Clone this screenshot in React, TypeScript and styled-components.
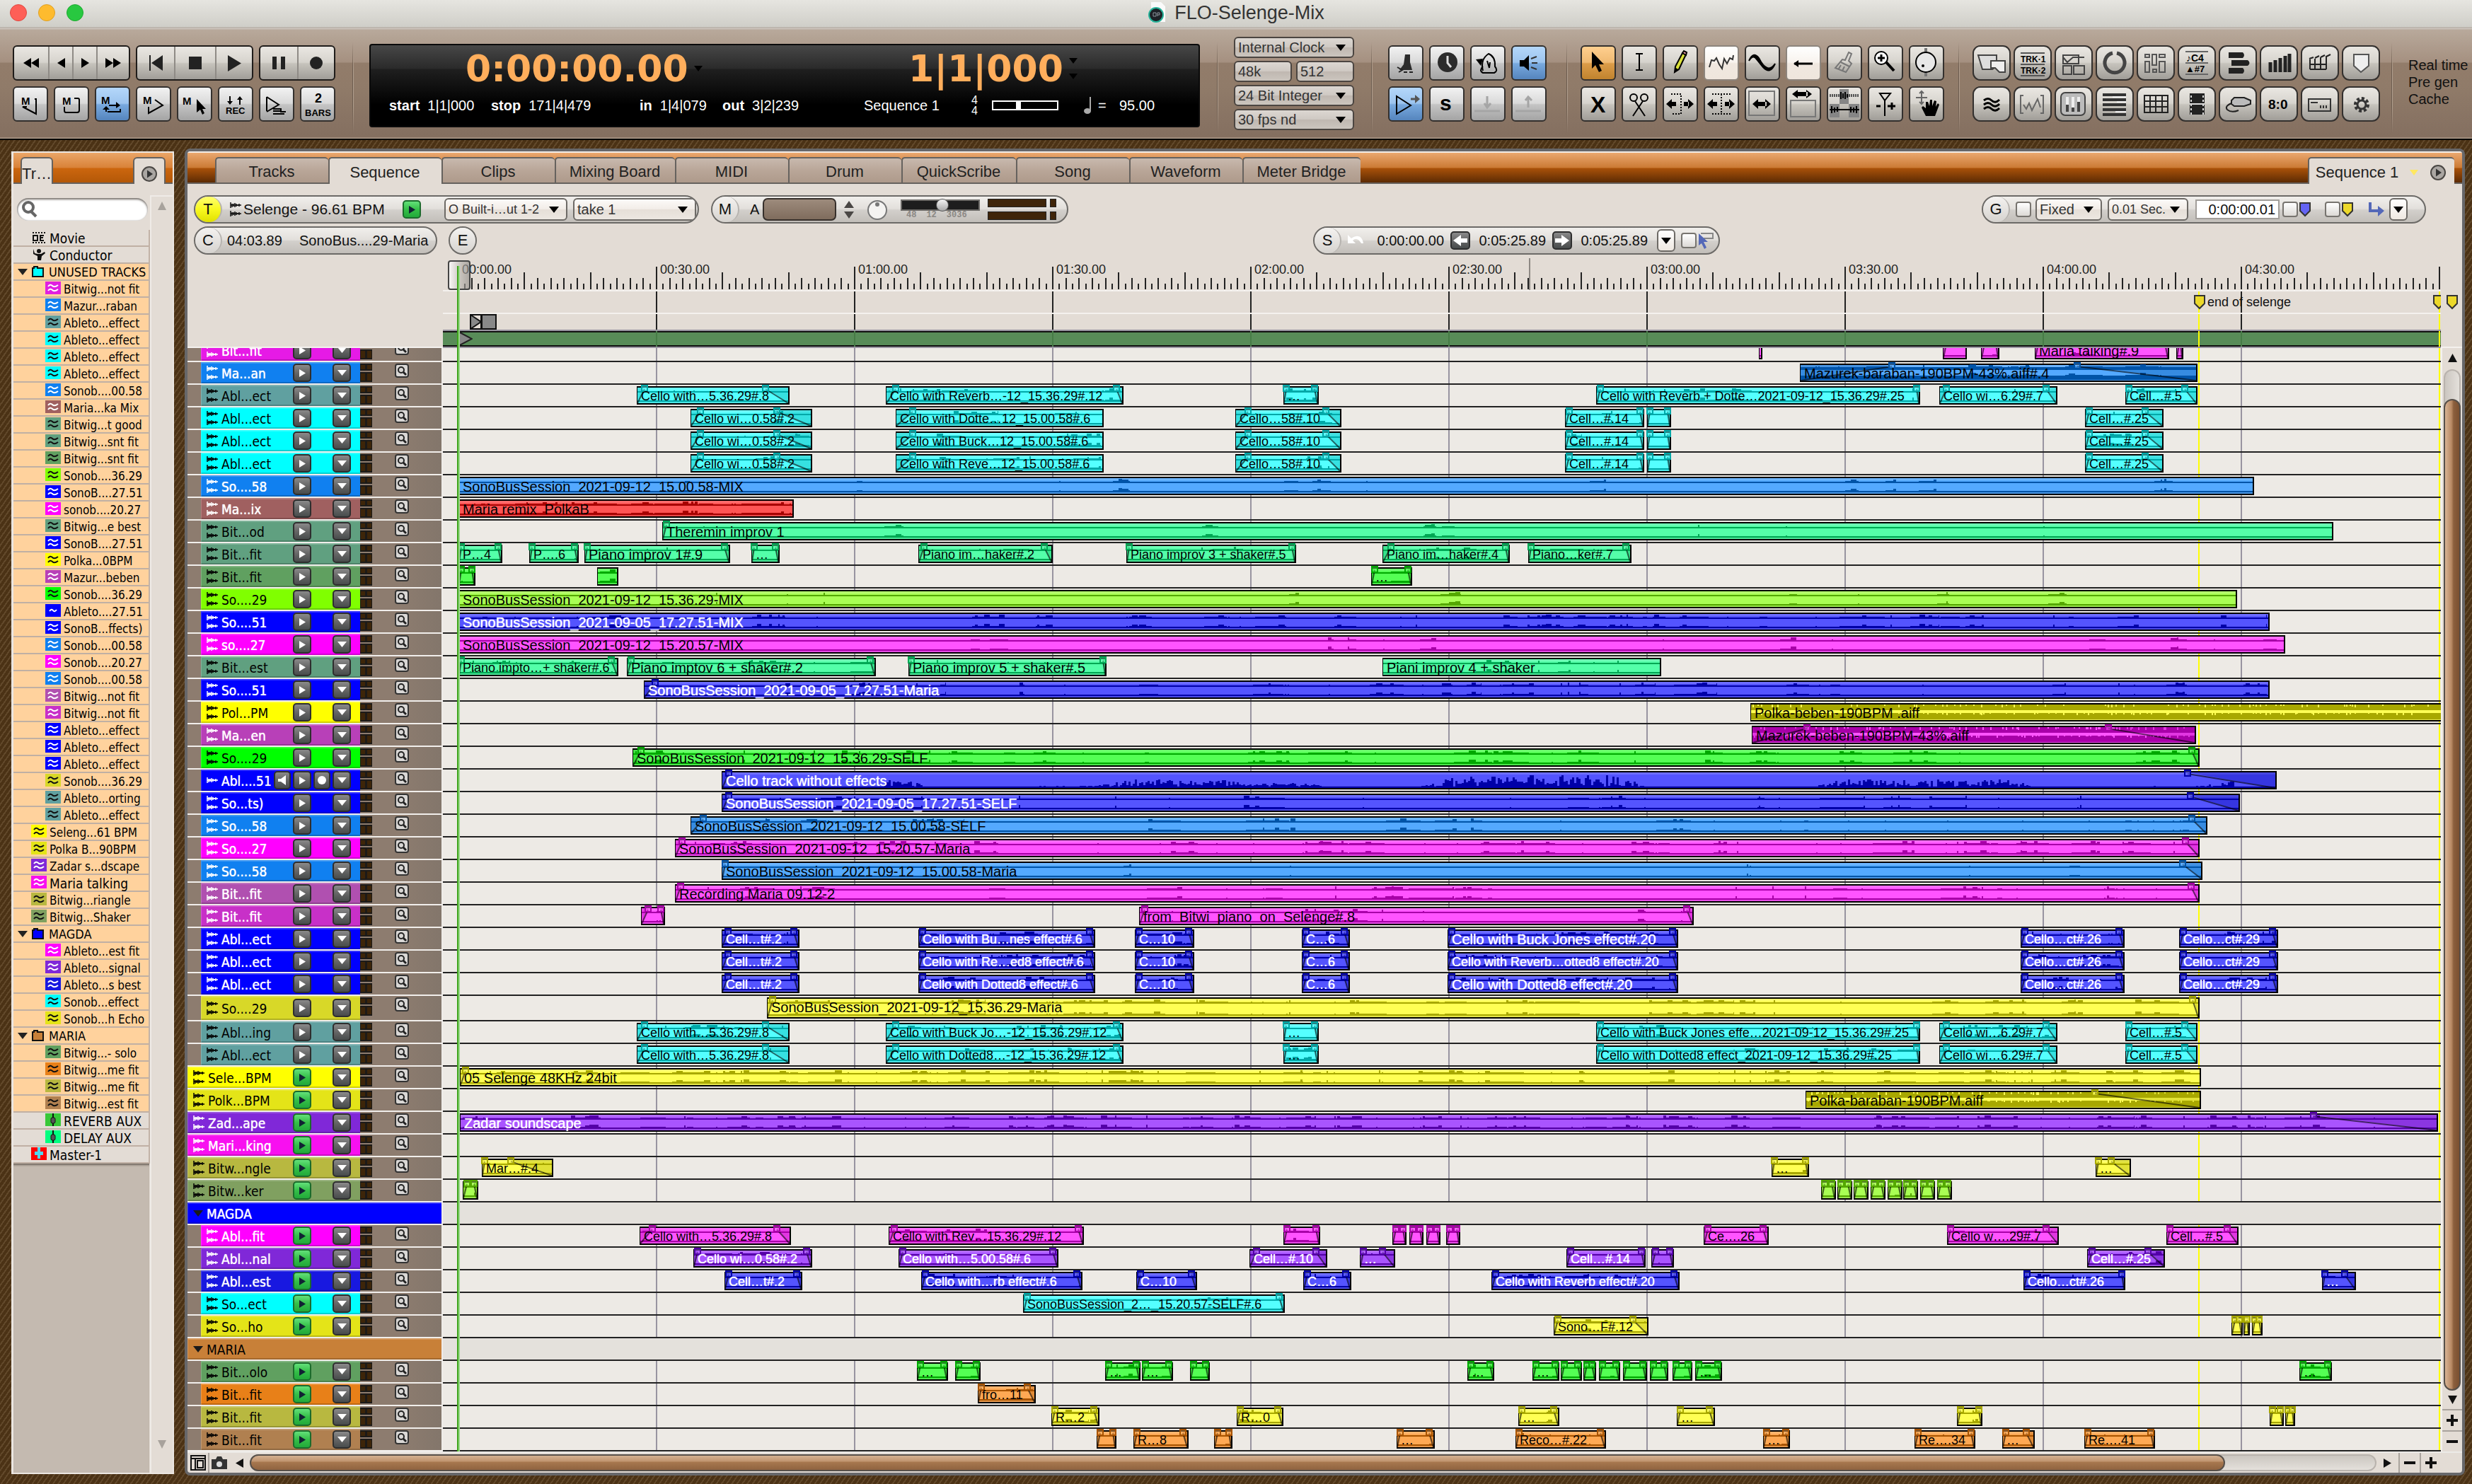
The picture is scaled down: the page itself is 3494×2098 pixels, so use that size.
import React from "react";
import styled, { createGlobalStyle } from "styled-components";

const Global = createGlobalStyle`
  *, *::before, *::after { box-sizing: border-box; }
  html, body { margin: 0; padding: 0; }
  body { font-family: "Liberation Sans", Arial, sans-serif; font-size: 20px; color: #111; background: #523a1b; }
  button, input, select { font-family: inherit; font-size: inherit; color: inherit; margin: 0; padding: 0; }
  ul { list-style: none; margin: 0; padding: 0; }
  svg { display: block; flex: none; }
`;

const uiSans = `"DejaVu Sans Condensed", "DejaVu Sans", "Noto Sans", sans-serif`;

/* ---------- window shell ---------- */

const Window = styled.div`
  display: flex;
  flex-direction: column;
  height: 100vh;
  min-width: 1900px;
  overflow: hidden;
`;

const TitleBar = styled.header`
  position: relative;
  display: flex;
  align-items: center;
  justify-content: center;
  height: 42px;
  flex: none;
  padding: 0 14px 6px;
  background: linear-gradient(#e6e5e0, #cfcec8 38px, #b0a79e 39px, #d8d0c8 41px, #a89a8e);
  h1 { display: flex; align-items: center; gap: 12px; margin: 0; font: 400 27px "Liberation Sans", Arial, sans-serif; color: #333; line-height: 34px; }
`;

const Lights = styled.div`
  position: absolute;
  left: 14px;
  top: 6px;
  display: flex;
  gap: 16px;
`;

const Light = styled.button<{ $c: string; $e: string }>`
  width: 24px;
  height: 24px;
  border-radius: 50%;
  background: ${(p) => p.$c};
  border: 1px solid ${(p) => p.$e};
`;

const Toolbar = styled.div`
  display: flex;
  align-items: flex-start;
  flex: none;
  height: 156px;
  padding: 10px 0 0 18px;
  border-bottom: 2px solid #000;
  background: linear-gradient(#b8a99b, #a59080 46px, #927c6a 47px, #907b69 80px, #846f60 152px, #b09c8c 153px);
`;

const Rule = styled.div<{ $before: number; $after: number }>`
  flex: none;
  width: 2px;
  height: 128px;
  margin: 8px ${(p) => p.$after}px 0 ${(p) => p.$before}px;
  background: linear-gradient(90deg, #6b5b4e 50%, #b3a190 50%);
  mask-image: linear-gradient(transparent, #000 30%, #000 70%, transparent);
`;

const Pad = styled.div<{ $cols: number; $w: number; $gap: number }>`
  display: grid;
  flex: none;
  grid-template-columns: repeat(${(p) => p.$cols}, ${(p) => p.$w}px);
  gap: 8px ${(p) => p.$gap}px;
  padding-top: 12px;
`;

const tones: Record<string, string> = {
  steel: "linear-gradient(#f2f2f2, #d9d9d9 48%, #c4c4c4 52%, #a4a4a4)",
  warm: "linear-gradient(#eae7e2, #d6d3cd 48%, #c6c3bc 52%, #a09d98)",
  blue: "linear-gradient(#b4d7fa, #9cc4ee 48%, #78a9de 52%, #5585bd)",
  orange: "linear-gradient(#ffcf8f, #f0ba72 48%, #dc9c48 52%, #c0832e)",
  light: "linear-gradient(#ffffff, #f8f3ee 48%, #f0e8e0 52%, #efe6dd)",
};

const ToolButton = styled.button<{ $tone: string; $r?: number }>`
  display: flex;
  align-items: center;
  justify-content: center;
  height: 50px;
  border: 2px solid ${(p) => (p.$tone === "light" ? "#8d857d" : "#33302e")};
  border-radius: ${(p) => p.$r || 6}px;
  background: ${(p) => tones[p.$tone]};
  color: #000;
  overflow: hidden;
`;

const Transport = styled.div`
  flex: none;
  width: 456px;
  padding-top: 12px;
  display: flex;
  flex-direction: column;
  gap: 8px;
`;
const SegRow = styled.div`display: flex; gap: 8px;`;
const Seg = styled.div`
  display: flex;
  height: 50px;
  border: 2px solid #1f1c1a;
  border-radius: 6px;
  overflow: hidden;
  background: ${tones.warm};
`;
const SegBtn = styled.button<{ $w: number }>`
  width: ${(p) => p.$w}px;
  display: flex;
  align-items: center;
  justify-content: center;
  border: 0;
  border-left: 2px solid #8f8b86;
  background: none;
  &:first-child { border-left: 0; }
`;
const PadRow = styled.div`
  display: grid;
  grid-template-columns: repeat(8, 50px);
  gap: 8px;
`;

/* ---------- counter display ---------- */

const Display = styled.section`
  flex: 1;
  height: 118px;
  margin-top: 10px;
  border: 2px solid #0a0a0a;
  border-radius: 4px;
  background: linear-gradient(#474747, #2a2a2a 33px, #1f1f1f 34px, #000 84px);
  color: #fff;
  overflow: hidden;
`;
const Counters = styled.div`
  display: grid;
  grid-template-columns: 626px 1fr;
  padding: 4px 0 0 134px;
  height: 70px;
`;
const Counter = styled.div`
  display: flex;
  align-items: center;
  gap: 8px;
  height: 58px;
  font: 700 52px/58px "DejaVu Sans", sans-serif;
  color: #ffae5c;
  white-space: nowrap;
`;
const Carets = styled.span`
  display: flex;
  flex-direction: column;
  gap: 14px;
`;
const Readouts = styled.div`
  display: grid;
  grid-template-columns: 144px 210px 117px 200px 152px 29px 130px 20px 30px 1fr;
  align-items: center;
  padding-left: 26px;
  height: 26px;
  font-size: 20px;
  white-space: nowrap;
  b { margin-right: 11px; }
`;
const Meter44 = styled.span`
  display: flex;
  flex-direction: column;
  font-size: 16px;
  line-height: 15px;
`;
const Beat = styled.span`
  width: 94px;
  height: 14px;
  border: 2px solid #fff;
  background: linear-gradient(90deg, transparent 32px, #fff 32px, #fff 39px, transparent 39px);
`;

/* ---------- pop-up menus ---------- */

const SelectBox = styled.label<{ $w?: number; $h?: number; $light?: boolean; $tight: boolean }>`
  display: grid;
  flex: none;
  align-items: center;
  width: ${(p) => (p.$w ? p.$w + "px" : "auto")};
  height: ${(p) => p.$h || 30}px;
  border: 2px solid ${(p) => (p.$light ? "#6d6a66" : "#4b4541")};
  border-radius: 6px;
  background: ${(p) =>
    p.$light
      ? "linear-gradient(#fcfaf8, #f2ede8 48%, #e6dfd8 52%, #ece7e1)"
      : "linear-gradient(#dcd7d2, #cfc9c3 48%, #c0b8b1 52%, #cbc5be)"};
  color: #333;
  > * { grid-area: 1 / 1; }
  > svg { justify-self: end; margin-right: 10px; pointer-events: none; }
  select {
    appearance: none;
    width: 100%;
    height: 100%;
    border: 0;
    padding-left: 4px;
    background: none;
    font-size: ${(p) => (p.$tight ? 18 : 20)}px;
    line-height: 24px;
  }
`;

const Clocking = styled.div`
  display: grid;
  flex: none;
  grid-template-columns: 82px 82px;
  gap: 4px 6px;
  > :nth-child(1), > :nth-child(4), > :nth-child(5) { grid-column: span 2; }
`;

const Notes = styled.p`
  flex: none;
  width: 90px;
  margin: 28px 0 0;
  line-height: 24px;
  white-space: nowrap;
`;

/* ---------- workspace ---------- */

const Workspace = styled.main`
  flex: 1;
  min-height: 0;
  display: flex;
  gap: 15px;
  padding: 12px 10px 12px 16px;
  background: repeating-linear-gradient(125deg, #4b3215 0 4px, #61482a 4px 6px);
`;

const Sidebar = styled.aside`
  flex: none;
  width: 230px;
  margin: 4px 0 2px;
  display: flex;
  flex-direction: column;
  border: 2px solid #ebe6e1;
  border-left-width: 3px;
  background: #e3dcd5;
`;
const SideHead = styled.div`
  display: flex;
  justify-content: space-between;
  align-items: flex-end;
  height: 44px;
  padding: 0 10px;
  border-bottom: 2px solid #66625e;
  background: linear-gradient(#eaa668, #d98238 21px, #cc660e 22px, #b35808);
`;
const SideTab = styled.button`
  display: flex;
  align-items: center;
  justify-content: center;
  width: 46px;
  height: 38px;
  margin-bottom: -2px;
  padding-top: 8px;
  border: 2px solid #66625e;
  border-bottom: 0;
  border-radius: 6px 6px 0 0;
  background: #e3dcd5;
  font-size: 22px;
  color: #222;
`;
const SideBody = styled.div`
  flex: 1;
  min-height: 0;
  display: grid;
  grid-template-columns: 1fr 32px;
  padding-top: 16px;
`;
const SideMain = styled.div`
  display: flex;
  flex-direction: column;
  min-width: 0;
`;
const Search = styled.label`
  display: flex;
  align-items: center;
  height: 32px;
  margin: 4px 3px 13px 5px;
  padding-left: 6px;
  border-radius: 16px;
  background: #fff;
  box-shadow: inset 0 2px 3px #77716b, inset 1px 0 2px #aaa;
  input { width: 130px; border: 0; background: none; outline: none; }
`;
const TrackList = styled.ul`
  border-right: 2px solid #c2b2a6;
`;
const ListRow = styled.li<{ $sel: boolean; $lv: number; $fs: number }>`
  display: flex;
  align-items: center;
  gap: 4px;
  height: 24px;
  padding-left: ${(p) => [6, 25, 45][p.$lv]}px;
  border-bottom: 2px solid #c0b0a4;
  background: ${(p) => (p.$sel ? "#ffd29d" : "#e3dcd5")};
  font: ${(p) => p.$fs}px/20px ${uiSans};
  color: #000;
  white-space: nowrap;
  span { padding-top: 2px; }
`;
const Swatch = styled.i<{ $c: string }>`
  display: flex;
  align-items: center;
  justify-content: center;
  flex: none;
  width: 22px;
  height: 18px;
  margin-bottom: 2px;
  background: ${(p) => p.$c};
`;
const SideFill = styled.div`
  flex: 1;
  margin-right: 1px;
  background: #c4bab0;
  box-shadow: inset 0 4px 3px -2px #6d645c;
`;
const SideScroll = styled.div`
  display: flex;
  flex-direction: column;
  justify-content: space-between;
  align-items: center;
  padding: 7px 0 34px;
  border-left: 2px solid #efebe7;
  border-top: 2px solid #efebe7;
`;

/* ---------- editor ---------- */

const Editor = styled.section`
  flex: 1;
  min-width: 0;
  display: flex;
  flex-direction: column;
  border: 4px solid #67676a;
  border-radius: 8px;
  background: #e3dcd5;
  overflow: hidden;
`;
const TabBar = styled.nav`
  display: flex;
  align-items: flex-end;
  flex: none;
  height: 46px;
  padding: 0 11px 0 39px;
  border-top: 2px solid #f2ece6;
  border-bottom: 2px solid #66625e;
  background: linear-gradient(#eaa870, #cb7a34 21px, #a95109 22px, #5c2b04);
`;
const Tab = styled.button<{ $w: number; $on?: boolean }>`
  width: ${(p) => p.$w}px;
  height: ${(p) => (p.$on ? 38 : 36)}px;
  margin-bottom: ${(p) => (p.$on ? -2 : 0)}px;
  display: flex;
  align-items: center;
  justify-content: center;
  gap: 16px;
  padding: 4px 2px 0 0;
  border: 2px solid #66625e;
  border-right-width: 0;
  border-bottom: 0;
  border-radius: 5px 5px 0 0;
  background: ${(p) => (p.$on ? "#e3dcd5" : "linear-gradient(#c8b9ae, #b9a698 50%, #ae9a8b)")};
  font-size: 22px;
  color: #222;
  white-space: nowrap;
`;
const Spacer = styled.div`flex: 1;`;

const StripRows = styled.div`
  flex: none;
  display: flex;
  flex-direction: column;
  gap: 4px;
  padding: 16px 51px 0 9px;
`;
const StripRow = styled.div`display: flex; height: 40px;`;
const Strip = styled.div<{ $w: number; $ml?: number }>`
  flex: none;
  display: flex;
  align-items: center;
  width: ${(p) => p.$w}px;
  height: 40px;
  margin-left: ${(p) => p.$ml || 0}px;
  padding-right: 4px;
  border: 2px solid #6c6a67;
  border-radius: 20px;
  background: linear-gradient(#f1efec, #e2dfdb 48%, #d3d0cc 52%, #c2beb9);
  overflow: hidden;
  white-space: nowrap;
`;
const Knob = styled.button<{ $on?: boolean; $solo?: boolean }>`
  flex: none;
  width: ${(p) => (p.$solo ? 36 : 38)}px;
  height: 36px;
  border: 0;
  border-right: ${(p) => (p.$solo ? 0 : "2px solid #b5b2ae")};
  border-radius: 18px;
  background: ${(p) => (p.$on ? "linear-gradient(#ffff70, #f8f820 50%, #e0e000)" : "linear-gradient(#f4f2f0, #d6d3cf)")};
  font-size: 22px;
`;
const Cell = styled.span<{ $w: number; $end?: boolean; $fs?: number }>`
  flex: none;
  display: flex;
  align-items: center;
  justify-content: ${(p) => (p.$end ? "flex-end" : "flex-start")};
  width: ${(p) => p.$w}px;
  font-size: ${(p) => p.$fs || 20}px;
`;
const KeyButton = styled.button<{ $green?: boolean; $w?: number }>`
  flex: none;
  display: flex;
  align-items: center;
  justify-content: center;
  width: ${(p) => p.$w || 26}px;
  height: 26px;
  border: 2px solid ${(p) => (p.$green ? "#1c6b2c" : "#2e2e2e")};
  border-radius: 5px;
  background: ${(p) => (p.$green ? "linear-gradient(#63e07a, #35bf48 50%, #22a93a)" : "linear-gradient(#8a8a8a, #666 50%, #484c4c)")};
`;
const DropButton = styled.button`
  flex: none;
  display: flex;
  align-items: center;
  justify-content: center;
  width: 26px;
  height: 32px;
  border: 2px solid #6d6a66;
  border-radius: 6px;
  background: linear-gradient(#fff, #efe8e1);
`;
const Check = styled.input`
  appearance: none;
  flex: none;
  width: 22px;
  height: 22px;
  border: 2px solid #77746f;
  border-radius: 4px;
  background: linear-gradient(#fff, #dcd9d5);
`;
const TimeField = styled.input`
  width: 119px;
  height: 28px;
  padding-right: 4px;
  border: 2px solid #a29e9a;
  background: #fff;
  text-align: right;
  font-size: 20px;
`;
const ColorWell = styled.button`
  width: 104px;
  height: 32px;
  border: 2px solid #37302c;
  border-radius: 7px;
  background: linear-gradient(#9d8b7c, #7f6c5d);
`;
const Fader = styled.div`
  display: flex;
  flex-direction: column;
  width: 112px;
  font: 700 12px/13px "Liberation Mono", monospace;
  color: #8b8884;
  input {
    appearance: none;
    width: 112px;
    height: 16px;
    border: 2px solid #6c6a67;
    background: #1d1d1d;
  }
  input::-webkit-slider-thumb {
    appearance: none;
    width: 18px;
    height: 18px;
    border-radius: 9px;
    border: 1px solid #555;
    background: linear-gradient(#f4f4f4, #a8a8a8);
  }
  div { display: flex; gap: 14px; padding-left: 8px; }
`;
const Levels = styled.div`
  display: grid;
  grid-template-columns: 83px 9px;
  grid-template-rows: 12px 12px;
  gap: 6px 5px;
  margin-left: 11px;
  i { background: #3f250a; border: 1px solid #222; }
`;

/* ---------- ruler ---------- */

const LANE_W = 2824;
const ORIGIN = 626;

const RulerArea = styled.div`
  flex: none;
  display: grid;
  grid-template-columns: 361px minmax(0, 1fr) 30px;
`;
const Gutter = styled.div`border-bottom: 2px solid #f4f1ee;`;
const RightGutter = styled.div`
  display: flex;
  flex-direction: column;
  padding: 56px 0 0 7px;
  border-bottom: 2px solid #f4f1ee;
`;
const Ruler = styled.div`
  position: relative;
  display: flex;
  flex-direction: column;
  overflow: hidden;
`;
const TickRow = styled.div`
  display: grid;
  height: 52px;
  border-bottom: 2px solid #f4f1ee;
  > * { grid-area: 1 / 1; }
`;
const TickLabels = styled.div`
  display: grid;
  grid-template-columns: repeat(10, 280px);
  padding: 11px 0 0 27px;
  font-size: 18px;
  line-height: 20px;
  color: #222;
`;
const gridLines = (c: string) => `linear-gradient(90deg, ${c} 2px, transparent 2px) 21px 0 / 280px 100%`;
const endLines = `linear-gradient(#ffff00, #ffff00) 2481px 0 / 2px 100% no-repeat, linear-gradient(#ffff00, #ffff00) 2821px 0 / 2px 100% no-repeat`;
const MarkerRow = styled.div`
  display: flex;
  align-items: center;
  height: 32px;
  padding-left: 2474px;
  border-bottom: 2px solid #f4f1ee;
  background: ${endLines}, ${gridLines("#222")};
`;
const MarkerLabel = styled.span`
  flex: none;
  width: 320px;
  padding-left: 2px;
  font-size: 18px;
  line-height: 22px;
  white-space: nowrap;
`;
const ConductorRow = styled.div`
  display: flex;
  height: 24px;
  padding-left: 38px;
  border-bottom: 2px solid #9894a0;
  background: ${endLines}, ${gridLines("#222")};
`;
const SequenceBar = styled.div`
  height: 24px;
  padding-left: 22px;
  border-bottom: 2px solid #9894a0;
  background: ${endLines}, ${gridLines("#477c47")}, linear-gradient(#111 2px, #588c58 2px, #588c58 20px, #111 20px);
`;
const PlayheadGrip = styled.div`
  position: absolute;
  left: 7px;
  top: 8px;
  width: 32px;
  height: 42px;
  border: 2px solid #444;
  border-radius: 4px;
  background: linear-gradient(90deg, #fbfafae0, #b5b0aca0 60%, #8f8a86a0);
`;
const Playhead = styled.div<{ $top: number }>`
  position: absolute;
  left: 20px;
  top: ${(p) => p.$top}px;
  bottom: 0;
  width: 4px;
  background: linear-gradient(90deg, #3fa51c 50%, #9ad88a 50%);
  z-index: 4;
  pointer-events: none;
`;

/* ---------- tracks ---------- */

const TracksArea = styled.div`
  flex: 1;
  min-height: 0;
  display: grid;
  grid-template-columns: minmax(0, 1fr) 30px;
`;
const Tracks = styled.div`
  position: relative;
  display: flex;
  flex-direction: column;
  justify-content: flex-end;
  overflow: hidden;
  min-height: 0;
`;
const TracksHead = styled.div`
  position: absolute;
  left: 361px;
  top: 0;
  bottom: 0;
  width: 0;
`;
const Row = styled.div<{ $h: number }>`
  flex: none;
  display: grid;
  grid-template-columns: 361px minmax(0, 1fr);
  height: ${(p) => p.$h}px;
`;
const Head = styled.div<{ $in: boolean }>`
  display: flex;
  border-right: 2px solid #efece9;
  border-bottom: 2px solid #f1eeeb;
  padding-left: ${(p) => (p.$in ? 19 : 0)}px;
  background: linear-gradient(90deg, #8d7c6f 300px, #83766b);
`;
const Plate = styled.div<{ $c: string; $white: boolean }>`
  flex: 1;
  display: flex;
  align-items: center;
  min-width: 0;
  padding: 0 13px 0 8px;
  background: ${(p) => p.$c};
  color: ${(p) => (p.$white ? "#fff" : "#000")};
  text-shadow: ${(p) => (p.$white ? "0 0 1px #fff" : "none")};
  font: 19px/24px ${uiSans};
  white-space: nowrap;
  box-shadow: inset 1px 2px 0 #ffffff33, inset 0 -2px 0 #0000002e;
  > span { flex: 1; padding: 2px 0 0 5px; }
`;
const HeadTail = styled.div`
  flex: none;
  width: 115px;
  display: flex;
  align-items: flex-start;
  gap: 32px;
`;
const MiniMeter = styled.div`
  display: grid;
  grid-template-rows: 10px 14px;
  gap: 2px;
  width: 17px;
  padding-top: 2px;
  i { border: 2px solid #1c1a18; border-width: 2px 1px; background: linear-gradient(90deg, #3d2509 6px, #1c1a18 6px, #1c1a18 9px, #3d2509 9px); }
`;
const ZoomButton = styled.button`
  display: flex;
  align-items: center;
  justify-content: center;
  width: 20px;
  height: 20px;
  margin-top: 2px;
  border: 2px solid #333;
  border-radius: 4px;
  background: #d9d7d5;
`;
const Keys = styled.div`display: flex; gap: 3px; align-items: center;`;
const Gap = styled.i<{ $w: number }>`flex: none; width: ${(p) => p.$w}px;`;

const Lane = styled.div<{ $folder?: boolean }>`
  position: relative;
  border-bottom: 2px solid #222;
  background: ${(p) => (p.$folder ? "#e4e1dc" : `${endLines}, ${gridLines("#9894a0")}, #edeae5`)};
  overflow: hidden;
`;
const ClipBox = styled.div<{ $bg: string; $white: boolean; $small: boolean }>`
  position: absolute;
  top: 2px;
  bottom: 2px;
  display: grid;
  border: 2px solid #000;
  border-left-width: 1px;
  background: ${(p) => p.$bg};
  color: ${(p) => (p.$white ? "#fff" : "#000")};
  text-shadow: ${(p) => (p.$white ? "0 0 1px #fff" : "none")};
  font-size: ${(p) => (p.$small ? 18 : 20)}px;
  line-height: 22px;
  white-space: nowrap;
  > * { grid-area: 1 / 1; }
  > svg { margin: -2px 0 0 -1px; overflow: visible; }
  > span { position: relative; padding: 1px 0 0 5px; }
`;

const VScroll = styled.div`
  display: flex;
  flex-direction: column;
  align-items: center;
  padding-top: 8px;
  border-left: 2px solid #f4f1ee;
`;
const VTrack = styled.div`
  flex: 1;
  width: 24px;
  margin-top: 10px;
  padding-top: 40px;
  border: 2px solid #b9b3ad;
  border-bottom: 0;
  border-radius: 12px;
  background: linear-gradient(90deg, #cbc6c0, #e4e0db);
`;
const VThumb = styled.div`
  height: 100%;
  margin: 0 -2px;
  border: 2px solid #57504a;
  border-radius: 12px;
  background: linear-gradient(90deg, #d8b495, #b98a64 45%, #8b5f3d 60%, #7b5030);
`;
const VCell = styled.button<{ $line?: boolean }>`
  display: flex;
  align-items: center;
  justify-content: center;
  width: 28px;
  height: ${(p) => (p.$line ? 30 : 26)}px;
  border: 0;
  border-top: ${(p) => (p.$line ? "2px solid #a9a39d" : "0")};
  background: none;
`;
const Foot = styled.footer`
  flex: none;
  display: flex;
  align-items: center;
  height: 30px;
  padding-right: 30px;
  border-top: 2px solid #eceae7;
`;
const HCell = styled.button<{ $w: number; $line?: boolean }>`
  display: flex;
  align-items: center;
  justify-content: center;
  width: ${(p) => p.$w}px;
  height: 28px;
  border: 0;
  border-left: ${(p) => (p.$line ? "2px solid #a9a39d" : "0")};
  background: none;
`;
const HTrack = styled.div`
  flex: 1;
  height: 24px;
  padding-right: 214px;
  border: 2px solid #b9b3ad;
  border-radius: 12px;
  background: linear-gradient(#cbc6c0, #e4e0db);
`;
const HThumb = styled.div`
  height: 24px;
  margin: -2px;
  border: 2px solid #57504a;
  border-radius: 12px;
  background: linear-gradient(#d3b091, #c0946f 40%, #a8784f 45%, #8f6340);
`;

/* ---------- small drawings ---------- */

const Tri = ({ w = 14, h = 14, dir = "down", c = "#000" }: { w?: number; h?: number; dir?: string; c?: string }) => {
  const d: Record<string, string> = { down: "M0 0H10L5 10Z", up: "M0 10H10L5 0Z", right: "M0 0V10L10 5Z", left: "M10 0V10L0 5Z" };
  return (
    <svg width={w} height={h} viewBox="0 0 10 10" preserveAspectRatio="none">
      <path d={d[dir]} fill={c} />
    </svg>
  );
};

const PlayDisc = () => (
  <svg width="24" height="24" viewBox="0 0 24 24">
    <circle cx="12" cy="12" r="10" fill="#aaa6a2" stroke="#4a4744" strokeWidth="2" />
    <path d="M9 6.500L17 12L9 17.500Z" fill="#333" />
  </svg>
);

const Flag = ({ c }: { c: string }) => (
  <svg width="18" height="22" viewBox="0 0 18 22">
    <path d="M2 2H16V13L9 20L2 13Z" fill={c} stroke="#333" strokeWidth="2" />
  </svg>
);

const WaveMark = ({ mono }: { mono?: boolean }) => {
  const one = (y: number) => `M1 ${y - 4}V${y + 4}M3 ${y - 2}V${y + 3}M5 ${y - 2}V${y + 2}M7 ${y - 3}V${y + 3}M9 ${y - 2}V${y + 2}M11 ${y - 1}V${y + 1}M13 ${y - 2}V${y + 2}M1 ${y}H16`;
  return (
    <svg width="16" height="24" viewBox="0 0 16 24" fill="none" stroke="currentColor" strokeWidth="1.500">
      {mono ? <path d={one(12)} /> : <path d={one(6) + one(18)} />}
    </svg>
  );
};

const Lens = () => (
  <svg width="16" height="16" viewBox="0 0 16 16" fill="none" stroke="#222" strokeWidth="2">
    <circle cx="7" cy="7" r="4" />
    <path d="M10 10L14 14" strokeWidth="3" />
  </svg>
);

const Approx = ({ c, one }: { c: string; one?: boolean }) => (
  <svg width="16" height="14" viewBox="0 0 16 14" fill="none" stroke={c} strokeWidth="2">
    {one ? <path d="M3 8Q6 4 8 7T13 6" /> : <path d="M1 5Q4 1 7 4T15 3M1 11Q4 7 7 10T15 9" />}
  </svg>
);

const Art = ({ children, w = 46 }: { children: React.ReactNode; w?: number }) => (
  <svg width={w} height="46" viewBox={`2 2 ${w} 46`} fill="none" stroke="#000" strokeWidth="2" fontFamily="Liberation Sans">
    {children}
  </svg>
);
const T = ({ x, y, s = 15, children, c = "#000", b = true }: { x: number; y: number; s?: number; children: string; c?: string; b?: boolean }) => (
  <text x={x} y={y} fontSize={s} fontWeight={b ? 700 : 400} fill={c} stroke="none">
    {children}
  </text>
);

const K = { fill: "#000", stroke: "none" };
const G = { fill: "#2b2b2b", stroke: "none" };

type Tool = [string, string, React.ReactNode];

const memoryTools: Tool[] = [
  ["Memory rewind", "steel", <Art><T x={12} y={26}>M</T><path d="M31 18H33V39L14 29L20 29" /></Art>],
  ["Memory stop", "steel", <Art><T x={12} y={26}>M</T><path d="M29 17H34Q36 17 36 19V34Q36 37 33 37H17Q15 37 15 34V29" /></Art>],
  ["Memory cycle", "blue", <Art><T x={9} y={25}>M</T><path d="M20 27H33M18 36H36V32M16 36V31" /><path d="M30 22L36 27L30 31ZM11 33L16 28L21 33Z" {...K} /></Art>],
  ["Auto stop", "steel", <Art><T x={10} y={25}>M</T><path d="M27 19L38 27L18 38V29" /></Art>],
  ["Link selection", "steel", <Art><T x={8} y={26}>M</T><path d="M28 18V37L33 33L36 40L39 38L36 32H41Z" {...K} /></Art>],
  ["Auto record", "steel", <Art><T x={11} y={39} s={13}>REC</T><path d="M17 14V24M31 15V26" /><path d="M13 21H21L17 26ZM27 19H35L31 14Z" {...K} /></Art>],
  ["Overdub", "steel", <Art><path d="M11 15V35M11 15L28 26L11 36M20 32H31V35H20M20 39H36M30 36H38" /></Art>],
  ["Countoff", "steel", <Art><T x={21} y={23} s={18}>2</T><T x={7} y={42} s={13}>BARS</T></Art>],
];

const audioTools: Tool[] = [
  ["Metronome", "steel", <Art><path d="M24 13H31V24L34 35H16L22 27Z" {...G} /><path d="M13 31L20 35L15 38M22 38H27M30 38H35" stroke="#222" /></Art>],
  ["Countoff clock", "steel", <Art><circle cx="26" cy="24" r="14" {...G} /><path d="M26 15V25L31 31" stroke="#ddd" strokeWidth="3" /></Art>],
  ["Wait for note", "steel", <Art><path d="M18 36Q14 20 26 12Q36 16 35 30Q40 36 34 39H18Q12 36 18 30M24 22L27 32L28 24" /><path d="M8 20L18 19L15 29Z" {...K} /></Art>],
  ["Audible", "blue", <Art><path d="M12 21H18L25 14V36L18 30H12Z" {...K} /><path d="M28 19L36 16M29 25H37M28 31L36 34" stroke="#333" /></Art>],
  ["Input monitor", "blue", <Art><path d="M12 14V39L32 27Z" /><path d="M32 18H39" stroke="#555" strokeWidth="3" /><path d="M38 12L45 18L38 24Z" fill="#555" stroke="none" /></Art>],
  ["Solo", "steel", <Art><T x={15} y={34} s={30}>s</T></Art>],
  ["Punch in", "steel", <Art><path d="M24 14V28M20 24L24 30L29 24M6 35H42" stroke="#a5a5a5" strokeWidth="3" /></Art>],
  ["Punch out", "steel", <Art><path d="M24 30V16M20 20L24 15L29 20M6 35H42" stroke="#a5a5a5" strokeWidth="3" /></Art>],
];

const editTools: Tool[] = [
  ["Pointer", "orange", <Art><path d="M16 9V33L21 28L26 38L30 36L26 27H33Z" {...K} /></Art>],
  ["I-beam", "warm", <Art><path d="M20 12H30M20 35H30M25 12V35" /></Art>],
  ["Pencil", "warm", <Art><path d="M17 38L18 30L28 11L33 13L23 34Z" fill="#d9e03a" /><path d="M28 11L30 8L34 10L33 14Z" fill="#f0a0b0" /><path d="M17 39V31L22 34Z" {...K} /></Art>],
  ["Freehand", "light", <Art><path d="M8 31L11 21L15 22L18 18L22 27L26 33L29 19L33 26L37 18L41 20L42 14" stroke="#333" /></Art>],
  ["Curve", "warm", <Art><path d="M6 22Q12 8 20 18Q32 42 43 26Q36 42 26 31L17 20Q12 12 6 22Z" fill="#000" /></Art>],
  ["Insert", "light", <Art><path d="M12 26H38" strokeWidth="3" /><path d="M11 26L18 21V31Z" {...K} /></Art>],
  ["Brush", "warm", <Art><path d="M31 10L35 12L31 22L35 26L27 38L12 32L22 20L26 21ZM20 24L32 30M17 33L20 28M22 36L25 30" stroke="#777" /></Art>],
  ["Zoom", "warm", <Art><circle cx="19" cy="18" r="9" fill="#fff" /><path d="M19 13V23M14 18H24" strokeWidth="3" /><path d="M26 24L37 36" strokeWidth="4" /></Art>],
  ["Scrub", "warm", <Art><path d="M24 4V44" stroke="#777" strokeWidth="4" /><circle cx="24" cy="24" r="14" fill="#e8e8e8" /><circle cx="20" cy="29" r="2" {...K} /></Art>],
  ["Mute", "warm", <Art><T x={14} y={37} s={32}>X</T></Art>],
  ["Scissors", "warm", <Art><circle cx="17" cy="16" r="5" /><circle cx="32" cy="16" r="5" /><path d="M19 21L33 42M30 21L16 42" /></Art>],
  ["Trim", "warm", <Art><path d="M12 11H26V39H12" strokeDasharray="2 2" /><path d="M5 25L13 18V32ZM44 25L36 18V32ZM12 22H19V28H12ZM30 22H37V28H30Z" {...K} /></Art>],
  ["Trim both", "warm", <Art><path d="M12 11H38M25 11V39M12 39H38" strokeDasharray="2 2" /><path d="M5 25L13 18V32ZM44 25L36 18V32ZM12 22H19V28H12ZM30 22H37V28H30Z" {...K} /></Art>],
  ["Slip", "warm", <Art><path d="M6 7H42V41H6Z" stroke="#777" /><path d="M11 25L19 18V32ZM37 25L29 18V32ZM17 22H31V28H17Z" {...K} /></Art>],
  ["Slide", "warm", <Art><path d="M7 20H42V43H7Z" stroke="#777" /><path d="M9 11L17 5V17ZM37 11L29 5V17ZM15 8H31V14H15Z" {...K} /></Art>],
  ["Comp", "warm", <Art><path d="M18 4H31V25H18ZM4 25H18V44H4ZM31 25H46V44H31Z" fill="#858585" stroke="none" /><path d="M4 13H46" stroke="#555" strokeDasharray="2 1" strokeWidth="4" /><path d="M20 8V18M23 10V17M26 8V18M29 11V16M4 33H46M7 28V38M11 30V37M15 29V36M34 29V37M38 30V37M42 28V38" /></Art>],
  ["Warp", "warm", <Art><path d="M17 10H32L24 20ZM24 20V42" /><path d="M12 28H18M28 28H39M34 23V33" strokeWidth="3" /></Art>],
  ["Hand", "warm", <Art><path d="M18 8V24M10 16H26M15 10L18 7L21 10M15 22L18 25L21 22" stroke="#666" /><path d="M24 42L18 30L20 28L24 31L24 22L27 22L29 28L30 19L33 19L33 28L36 20L39 21L38 29L41 24L43 26L37 42Z" {...K} /></Art>],
];

const windowTools: Tool[] = [
  ["Bundles", "warm", <Art w={50}><path d="M8 14H34V30L28 34H14Z" fill="#ddd" stroke="#444" /><path d="M26 22H46V38H38L32 32H26Z" fill="#eee" stroke="#444" /></Art>],
  ["Tracks window", "warm", <Art w={50}><path d="M10 11H44M10 27H44M10 43H44" stroke="#555" /><T x={10} y={24} s={12}>TRK·1</T><T x={10} y={40} s={12}>TRK·2</T></Art>],
  ["Effects", "warm", <Art w={50}><path d="M12 14H34V26H12ZM12 29H24V41H12ZM27 29H42V41H27ZM12 17L18 24L26 17H42" stroke="#444" /></Art>],
  ["Meter", "warm", <Art w={50}><path d="M30 11A14 14 0 1 1 24 11" stroke="#444" strokeWidth="5" /></Art>],
  ["Layout", "warm", <Art w={50}><path d="M12 13H18V17H12ZM12 23H18V38H12ZM22 13H28V28H22ZM23 34H28V38H23ZM32 13H40V17H32ZM32 23H40V38H32Z" stroke="#555" /></Art>],
  ["Event list", "warm", <Art w={50}><path d="M11 9H43M11 25H43M11 41H43" stroke="#666" /><T x={12} y={23} s={14}>♪C4</T><T x={11} y={38} s={13}>▲#7</T></Art>],
  ["Sequence list", "warm", <Art w={50}><path d="M14 10H34Q38 14 34 18H14ZM18 21H41Q46 25 41 29H18ZM14 32H34Q38 36 34 40H14Z" fill="#222" stroke="none" /></Art>],
  ["Levels", "warm", <Art w={50}><path d="M15 38V24M22 38V21M29 38V18M36 38V15M42 38V12" strokeWidth="5" stroke="#222" /></Art>],
  ["Notation", "warm", <Art w={50}><path d="M13 34H36M13 27H36M13 20V34M20 19V34M28 17V34M36 15V34M12 19L18 17M20 18L26 15M28 17L34 14M36 16L42 13" stroke="#222" /></Art>],
  ["Markers", "warm", <Art w={50}><path d="M17 13H38V29L27 38L17 29Z" fill="#eee" stroke="#555" /></Art>],
  ["Soundbites", "warm", <Art w={50}><path d="M16 20Q22 15 27 20T38 19M16 26Q22 21 27 26T38 25M16 32Q22 27 27 32T38 31" strokeWidth="3" /></Art>],
  ["Waveform window", "warm", <Art w={50}><path d="M14 13H10V38H14M38 13H42V38H38M14 26L18 32L22 24L26 34L34 18L38 30" stroke="#666" /></Art>],
  ["Mixer", "warm", <Art w={50}><rect x="9" y="9" width="34" height="32" rx="6" fill="#bbb" stroke="#444" /><path d="M18 15V36M26 15V36M34 15V36" stroke="#eee" strokeWidth="4" /><path d="M18 26V36M26 30V36M34 22V36" stroke="#444" strokeWidth="4" /></Art>],
  ["List", "warm", <Art w={50}><path d="M10 12H43M10 19H43M10 26H43M10 33H43M10 40H43" strokeWidth="4" stroke="#333" /><path d="M24 15H43M30 22H43M28 36H43" stroke="#eee" /></Art>],
  ["Grid", "warm", <Art w={50}><path d="M11 13H44V37H11ZM11 21H44M11 29H44M19 13V37M27 13V37M36 13V37" stroke="#222" /></Art>],
  ["Movie window", "warm", <Art w={50}><path d="M17 10H38V40H17Z" fill="#222" stroke="none" /><path d="M19 13V40M36 13V40" stroke="#ddd" strokeDasharray="3 3" /><path d="M17 25H38" stroke="#ddd" /></Art>],
  ["Cable", "warm", <Art w={50}><path d="M18 24Q8 28 12 33Q18 38 28 34" stroke="#222" /><path d="M18 20L22 16H36L45 20V25L36 28H22L18 25Z" fill="#bbb" stroke="#222" /></Art>],
  ["Ratio", "warm", <Art w={50}><T x={12} y={32} s={19}>8:0</T></Art>],
  ["Drive", "warm", <Art w={50}><path d="M11 18H42V35H11Z" stroke="#333" /><path d="M14 23H24M28 31V27M32 31V27M36 31V27" stroke="#333" /></Art>],
  ["Settings", "warm", <Art w={50}><circle cx="28" cy="26" r="6" stroke="#333" strokeWidth="3" /><circle cx="28" cy="26" r="9" stroke="#333" strokeWidth="4" strokeDasharray="4 3" /></Art>],
];

/* ---------- data ---------- */

const CY = "#00ffff", AZ = "#1080f0", BL = "#0000ff", MG = "#ff00ff", TE = "#60a0a0", SE = "#60a080", GR = "#60a060";

/* name, colour, indent level (0 folder, 1, 2), light symbol, kind */
type Item = [string, string, number, boolean?, string?];
const list: Item[] = [
  ["Movie", "", 1, false, "movie"], ["Conductor", "", 1, false, "cond"], ["UNUSED TRACKS", CY, 0],
  ["Bitwig...not fit", "#e020e0", 2, true], ["Mazur...raban", AZ, 2, true], ["Ableto...effect", TE, 2],
  ["Ableto...effect", CY, 2], ["Ableto...effect", CY, 2], ["Ableto...effect", CY, 2],
  ["Sonob....00.58", AZ, 2, true], ["Maria...ka Mix", "#a06060", 2, true], ["Bitwig...t good", SE, 2],
  ["Bitwig...snt fit", SE, 2], ["Bitwig...snt fit", GR, 2], ["Sonob....36.29", "#80ff00", 2],
  ["SonoB....27.51", BL, 2, true], ["sonob....20.27", MG, 2, true], ["Bitwig...e best", SE, 2],
  ["SonoB....27.51", BL, 2, true], ["Polka...0BPM", "#ffff00", 2], ["Mazur...beben", "#b840b8", 2, true],
  ["Sonob....36.29", "#00ff00", 2], ["Ableto....27.51", BL, 2, true, "mono"], ["SonoB...ffects)", BL, 2, true],
  ["Sonob....00.58", AZ, 2, true], ["Sonob....20.27", MG, 2, true], ["Sonob....00.58", AZ, 2, true],
  ["Bitwig...not fit", "#b050b0", 2, true], ["Bitwig...not fit", "#c830c8", 2, true], ["Ableto...effect", BL, 2, true],
  ["Ableto...effect", BL, 2, true], ["Ableto...effect", BL, 2, true], ["Sonob....36.29", "#d8d828", 2],
  ["Ableto...orting", TE, 2], ["Ableto...effect", TE, 2], ["Seleng...61 BPM", "#ffff00", 1],
  ["Polka B...90BPM", "#e4e418", 1], ["Zadar s...dscape", "#8028d8", 1, true], ["Maria talking", "#f810f0", 1, true],
  ["Bitwig...riangle", "#b8b840", 1], ["Bitwig...Shaker", "#80a060", 1], ["MAGDA", BL, 0],
  ["Ableto...est fit", MG, 2, true], ["Ableto...signal", "#8028d8", 2, true], ["Ableto...s best", "#1818e0", 2, true],
  ["Sonob...effect", CY, 2], ["Sonob...h Echo", "#e4e418", 2], ["MARIA", "#c88038", 0],
  ["Bitwig...- solo", GR, 2], ["Bitwig...me fit", "#e88018", 2], ["Bitwig...me fit", "#b8b840", 2],
  ["Bitwig...est fit", "#b08050", 2], ["REVERB AUX", "#38c838", 2, false, "aux"], ["DELAY AUX", "#00ff80", 2, false, "aux"],
  ["Master-1", "#ff0000", 1, false, "master"],
];

/* clip palette: body, wave, light text */
const pal: Record<string, [string, string, boolean]> = {
  cyan: ["#54ffff", "#00a8a8", false],
  blue: ["#5454ff", "#0000a8", true],
  azure: ["#54a9ff", "#0054a8", false],
  red: ["#ff5454", "#a80000", false],
  spring: ["#54ffa9", "#00a854", false],
  green: ["#54ff54", "#00a800", false],
  lime: ["#a9ff54", "#54a800", false],
  magenta: ["#ff54ff", "#a800a8", false],
  yellow: ["#ffff54", "#a8a800", false],
  purple: ["#a954ff", "#5400a8", true],
  orange: ["#ffa954", "#a85400", false],
};

/* start, end, label, fade-in length, fade-out length */
type ClipDef = [number, number, string?, number?, number?];
type TrackDef = { n: string; c: string; w?: boolean; top?: boolean; folder?: boolean; on?: boolean; mono?: boolean; pal?: string; d?: number; clips?: ClipDef[] };

const cello = (b: string, c: string): ClipDef[] => [
  [900, 1116, "Cello with…5.36.29#.8", 11, 34], [1252, 1588, b, 14, 10], [1814, 1864, "…", 4, 6],
  [2256, 2714, c, 6, 5], [2741, 2908, "Cello wi…6.29#.7", 10, 16], [3004, 3106, "Cell…#.5", 5, 18],
];
const cyan = (b: string): ClipDef[] => [
  [976, 1148, "Cello wi…0.58#.2", 14, 50], [1266, 1560, b, 24, 0], [1746, 1896, "Cello…58#.10", 18, 22],
  [2212, 2324, "Cell…#.14", 6, 6], [2328, 2362, "", 4, 5], [2947, 3058, "Cell…#.25", 6, 26],
];
const blues = (b: string, c: string): ClipDef[] => [
  [1020, 1130, "Cell…t#.2", 9, 8], [1298, 1548, b, 6, 8], [1604, 1688, "C…10", 6, 8], [1840, 1908, "C…6", 6, 8],
  [2046, 2372, c, 6, 8], [2856, 3003, "Cello…ct#.26", 6, 8], [3080, 3220, "Cello…ct#.29", 6, 8],
];
const S = "SonoBusSession_2021-09-";

const tracks: TrackDef[] = [
  { n: "Bit...fit", c: "#e61ae6", w: true, pal: "magenta", clips: [[2486, 2491], [2746, 2780, "", 5, 0], [2800, 2826, "", 5, 5], [2876, 3066, "Maria talking#.9", 5, 6], [3076, 3086, "", 4, 4]] },
  { n: "Ma...an", c: AZ, w: true, pal: "azure", d: 5, clips: [[2544, 3106, "Mazurek-baraban-190BPM-43%.aiff#.4", 130, 170]] },
  { n: "Abl...ect", c: TE, pal: "cyan", d: 1, clips: cello("Cello with Reverb…-12_15.36.29#.12", "Cello with Reverb + Dotte…2021-09-12_15.36.29#.25") },
  { n: "Abl...ect", c: CY, pal: "cyan", d: 1, clips: cyan("Cello with Dotte…12_15.00.58#.6") },
  { n: "Abl...ect", c: CY, pal: "cyan", d: 1, clips: cyan("Cello with Buck…12_15.00.58#.6") },
  { n: "Abl...ect", c: CY, pal: "cyan", d: 1, clips: cyan("Cello with Reve…12_15.00.58#.6") },
  { n: "So....58", c: AZ, w: true, pal: "azure", d: 0, clips: [[648, 3186, S + "12_15.00.58-MIX"]] },
  { n: "Ma...ix", c: "#a06060", w: true, pal: "red", d: 2, clips: [[648, 1122, "Maria remix_PolkaB"]] },
  { n: "Bit...od", c: SE, pal: "spring", d: 0, clips: [[936, 3298, "Theremin improv 1", 6]] },
  { n: "Bit...fit", c: SE, pal: "spring", d: 1, clips: [[648, 710, "P…4", 4, 6], [748, 818, "P….6", 4, 6], [826, 1032, "Piano improv 1#.9", 4, 8], [1062, 1102, "…", 4, 6], [1298, 1488, "Piano im…haker#.2", 8, 12], [1592, 1832, "Piano improv 3 + shaker#.5", 4, 6], [1954, 2134, "Piano im…haker#.4", 12, 6], [2160, 2306, "Piano…ker#.7", 4, 8]] },
  { n: "Bit...fit", c: GR, pal: "green", d: 1, clips: [[648, 672, "", 4, 5], [844, 874], [1938, 1996, "…", 5, 6]] },
  { n: "So....29", c: "#80ff00", pal: "lime", d: 0, clips: [[648, 3162, S + "12_15.36.29-MIX"]] },
  { n: "So....51", c: BL, w: true, pal: "blue", d: 1, clips: [[648, 3208, S + "05_17.27.51-MIX"]] },
  { n: "so....27", c: MG, w: true, pal: "magenta", d: 0, clips: [[648, 3230, S + "12_15.20.57-MIX"]] },
  { n: "Bit...est", c: SE, pal: "spring", d: 1, clips: [[648, 874, "Piano impto…+ shaker#.6", 4, 10], [886, 1238, "Piano imptov 6 + shaker#.2", 6, 8], [1284, 1564, "Piano improv 5 + shaker#.5", 4, 5], [1954, 2348, "Piani improv 4 + shaker"]] },
  { n: "So....51", c: BL, w: true, pal: "blue", d: 1, clips: [[910, 3208, S + "05_17.27.51-Maria", 16]] },
  { n: "Pol...PM", c: "#ffff00", pal: "yellow", d: 3, clips: [[2474, 3452, "Polka-beben-190BPM .aiff"]] },
  { n: "Ma...en", c: "#b840b8", w: true, pal: "magenta", d: 3, clips: [[2476, 3104, "Mazurek-beben-190BPM-43%.aiff", 78, 124]] },
  { n: "So....29", c: "#00ff00", pal: "green", d: 1, clips: [[894, 3109, S + "12_15.36.29-SELF", 12, 11]] },
  { n: "Abl....51", c: BL, w: true, mono: true, pal: "blue", d: 4, clips: [[1020, 3218, "Cello track without effects", 10, 126]] },
  { n: "So...ts)", c: BL, w: true, pal: "blue", d: 1, clips: [[1020, 3166, S + "05_17.27.51-SELF", 10, 70]] },
  { n: "So....58", c: AZ, w: true, pal: "azure", d: 1, clips: [[976, 3120, S + "12_15.00.58-SELF", 18, 22]] },
  { n: "So....27", c: MG, w: true, pal: "magenta", d: 1, clips: [[954, 3109, S + "12_15.20.57-Maria", 10, 20]] },
  { n: "So....58", c: AZ, w: true, pal: "azure", d: 0, clips: [[1020, 3113, S + "12_15.00.58-Maria", 5, 28]] },
  { n: "Bit...fit", c: "#b050b0", w: true, pal: "magenta", d: 1, clips: [[954, 3109, "Recording Maria 09.12-2", 8, 12]] },
  { n: "Bit...fit", c: "#c830c8", w: true, pal: "magenta", d: 1, clips: [[906, 940, "", 10, 6], [1610, 2394, "from_Bitwi_piano_on_Selenge#.8", 8, 10]] },
  { n: "Abl...ect", c: BL, w: true, pal: "blue", d: 2, clips: blues("Cello with Bu…nes effect#.6", "Cello with Buck Jones effect#.20") },
  { n: "Abl...ect", c: BL, w: true, pal: "blue", d: 2, clips: blues("Cello with Re…ed8 effect#.6", "Cello with Reverb…otted8 effect#.20") },
  { n: "Abl...ect", c: BL, w: true, pal: "blue", d: 2, clips: blues("Cello with Dotted8 effect#.6", "Cello with Dotted8 effect#.20") },
  { n: "So....29", c: "#d8d828", pal: "yellow", d: 1, clips: [[1084, 3109, S + "12_15.36.29-Maria", 8, 10]] },
  { n: "Abl...ing", c: TE, pal: "cyan", d: 1, clips: cello("Cello with Buck Jo…-12_15.36.29#.12", "Cello with Buck Jones effe…2021-09-12_15.36.29#.25") },
  { n: "Abl...ect", c: TE, pal: "cyan", d: 1, clips: cello("Cello with Dotted8…-12_15.36.29#.12", "Cello with Dotted8 effect_2021-09-12_15.36.29#.25") },
  { n: "Sele...BPM", c: "#ffff00", top: true, on: true, pal: "yellow", d: 2, clips: [[650, 3111, "05 Selenge 48KHz 24bit", 8, 0]] },
  { n: "Polk...BPM", c: "#e4e418", top: true, on: true, pal: "yellow", d: 3, clips: [[2552, 3111, "Polka-baraban-190BPM.aiff", 0, 150]] },
  { n: "Zad...ape", c: "#8028d8", w: true, top: true, on: true, pal: "purple", d: 2, clips: [[650, 3446, "Zadar soundscape", 0, 176]] },
  { n: "Mari...king", c: "#f810f0", w: true, top: true, on: true },
  { n: "Bitw...ngle", c: "#b8b840", top: true, on: true, pal: "yellow", d: 2, clips: [[681, 782, "Mar…#.4", 4, 60], [2504, 2557, "…", 4, 5], [2962, 3012, "…", 4, 28]] },
  { n: "Bitw...ker", c: "#80a060", top: true, on: true, pal: "lime", d: 2, clips: [[654, 676, "", 6, 6], ...[2574, 2597, 2620, 2644, 2668, 2690, 2714, 2738].map((x) => [x, x + 21, "", 5, 6] as ClipDef)] },
  { n: "MAGDA", c: BL, w: true, folder: true },
  { n: "Abl...fit", c: MG, w: true, on: true, pal: "magenta", d: 1, clips: [[904, 1118, "Cello with…5.36.29#.8", 18, 20], [1256, 1532, "Cello with Rev…15.36.29#.12", 8, 8], [1814, 1866, "", 5, 6], [1968, 1988, "", 5, 5], [1992, 2012, "", 5, 5], [2016, 2036, "", 5, 5], [2044, 2064, "", 5, 5], [2408, 2500, "Ce….26", 6, 8], [2752, 2910, "Cello w….29#.7", 5, 18], [3062, 3164, "Cell…#.5", 5, 16]] },
  { n: "Abl...nal", c: "#8028d8", w: true, on: true, pal: "purple", d: 1, clips: [[980, 1148, "Cello wi…0.58#.2", 6, 8], [1270, 1496, "Cello with…5.00.58#.6", 6, 8], [1766, 1876, "Cell…#.10", 10, 16], [1922, 1972, "…", 5, 18], [2214, 2326, "Cell…#.14", 6, 6], [2334, 2366, "", 6, 6], [2950, 3060, "Cell…#.25", 7, 24]] },
  { n: "Abl...est", c: "#1818e0", w: true, on: true, pal: "blue", d: 2, clips: [[1024, 1134, "Cell…t#.2", 6, 8], [1302, 1530, "Cello with…rb effect#.6", 6, 8], [1606, 1692, "C…10", 6, 8], [1842, 1910, "C…6", 6, 8], [2108, 2374, "Cello with Reverb effect#.20", 6, 8], [2860, 3004, "Cello…ct#.26", 5, 5], [3282, 3330, "…", 4, 16]] },
  { n: "So...ect", c: CY, on: true, pal: "cyan", d: 1, clips: [[1446, 1816, "SonoBusSession_2…_15.20.57-SELF#.6", 6, 8]] },
  { n: "So...ho", c: "#e4e418", on: true, pal: "yellow", d: 1, clips: [[2196, 2330, "Sono…F#.12", 6, 22], [3154, 3170, "", 5, 5], [3171, 3180, "", 3, 4], [3183, 3198, "", 4, 5]] },
  { n: "MARIA", c: "#c88038", folder: true },
  { n: "Bit...olo", c: GR, on: true, pal: "green", d: 2, clips: ([[1296, 1340], [1350, 1386], [1562, 1612], [1614, 1658], [1682, 1710], [2074, 2112], [2166, 2204], [2206, 2236], [2238, 2256], [2260, 2290], [2294, 2328], [2332, 2358], [2364, 2392], [2396, 2434], [3250, 3296]] as number[][]).map(([a, b]) => [a, b, b - a > 36 ? "…" : "", 5, 6] as ClipDef) },
  { n: "Bit...fit", c: "#e88018", on: true, pal: "orange", d: 2, clips: [[1382, 1464, "fro…11", 5, 12]] },
  { n: "Bit...fit", c: "#b8b840", on: true, pal: "yellow", d: 1, clips: [[1486, 1554, "R…2", 5, 8], [1748, 1814, "R…0", 5, 8], [2146, 2204, "…", 5, 8], [2370, 2424, "…", 5, 8], [2766, 2802, "", 5, 5], [3208, 3228, "", 4, 5], [3230, 3244, "", 4, 4]] },
  { n: "Bit...fit", c: "#b08050", on: true, pal: "orange", d: 1, clips: [[1550, 1578, "", 5, 5], [1602, 1680, "R…8", 5, 8], [1716, 1742, "", 5, 5], [1974, 2028, "…", 5, 8], [2142, 2270, "Reco…#.22", 5, 8], [2492, 2530, "…", 5, 6], [2706, 2792, "Re….34", 5, 6], [2830, 2876, "…", 5, 12], [2946, 3046, "Re….41", 5, 6]] },
];

/* ---------- clip drawing ---------- */

const rng = (seed: number) => () => {
  seed = (seed * 1664525 + 1013904223) % 4294967296;
  return seed / 4294967296;
};

/* bursts of level standing on a base line; density sets how often a burst starts */
const wave = (w: number, base: number, density: number, seed: number) => {
  const r = rng(seed);
  const start = [0.025, 0.11, 0.22][density] ?? 0.2;
  let d = "";
  let x = 4;
  while (x < w - 4) {
    if (r() < start) {
      let len = r() < 0.5 ? 2 : 6 + Math.floor(r() * (density === 0 ? 26 : 60));
      len = Math.min(len, w - 4 - x);
      let k = 0;
      while (k < len) {
        const seg = 2 + Math.floor(r() * 8);
        const h = r() < 0.75 ? 2 : r() < 0.7 ? 4 : 5;
        d += `M${x + k} ${base}v${-h}h${Math.min(seg, len - k)}v${h}Z`;
        k += seg;
      }
      x += len + 2;
    } else x += 6;
  }
  return d;
};

const dense = (w: number, seed: number) => {
  const r = rng(seed);
  let d = "";
  for (let x = 3; x < w - 3; x += 2 + Math.floor(r() * 10)) {
    if (r() < 0.6) d += `M${x} 2v${2 + Math.floor(r() * 3)}h2V2Z`;
    if (r() < 0.6) d += `M${x} 12v${3 + Math.floor(r() * 3)}h2V12Z`;
  }
  return d;
};

const swell = (w: number, h: number, seed: number) => {
  const r = rng(seed);
  let d = "";
  for (let x = 230; x < w - 60; x += 3) {
    const gate = Math.sin(x / 83) + Math.sin(x / 31) * 0.4 + 0.5;
    if (gate <= 0) continue;
    const loud = x > 1020 && x < 1300 ? 18 : 10;
    const a = Math.min(17, 1 + Math.round(Math.min(gate, 1) * r() * loud));
    d += `M${x} ${h}v${-a}h3v${a}Z`;
  }
  return d;
};

const Clip = ({ def, p, d, h, seed }: { def: ClipDef; p: string; d: number; h: number; seed: number }) => {
  const [a, b, label = "", fin = 0, fout = 0] = def;
  const w = b - a;
  const [body, ink, white] = pal[p];
  const edge = "#00000099";
  const low = h - 6;
  const small = label.includes("…") || label.length * 9.6 > w - 10;
  return (
    <ClipBox $bg={body} $white={white} $small={small} style={{ left: a - ORIGIN, width: w }}>
      <svg width={w} height={h} viewBox={`0 0 ${w} ${h}`}>
        <rect x="1" y="2" width={Math.max(w - 3, 0)} height="3" fill="#fff" opacity="0.150" />
        <rect x="1" y={h - 5} width={Math.max(w - 3, 0)} height="3" fill="#000" opacity="0.100" />
        {d === 3 || d === 5 ? (
          <>
            <path d={d === 3 ? `M1 2H${w - 2}V10H1ZM1 14H${w - 2}V${h - 3}H1Z` : `M1 5H${w - 2}V9H1ZM1 17H${w - 2}V${h - 3}H1Z`} fill={ink} />
            {d === 3 ? <path d={dense(w, seed)} fill={body} /> : <path d={wave(w, 6, 2, seed) + wave(w, 18, 2, seed)} fill={ink} />}
          </>
        ) : d === 4 ? (
          <path d={`M1 ${low + 2}H${w - 2}V${h - 2}H1Z` + swell(w, h - 3, seed)} fill={ink} />
        ) : (
          <>
            <path d={`M1 7H${w - 2}V9H1ZM1 ${low}H${w - 2}V${low + 2}H1Z`} fill={ink} />
            <path d={wave(w, 8, d, seed) + wave(w, low + 1, d, seed)} fill={ink} />
          </>
        )}
        {fin > 0 && (
          <g stroke={ink} strokeWidth="2">
            <path d={`M1 ${h - 2}V2H${fin}Z`} fill={ink} fillOpacity="0.350" stroke="none" />
            <path d={`M1 ${h - 2}L${fin} 4`} stroke={edge} />
            <rect x={Math.max(fin - 4, 0)} y="-1" width="8" height="8" fill={body} fillOpacity="0.500" />
          </g>
        )}
        {fout > 0 && (
          <g stroke={ink} strokeWidth="2">
            <path d={`M${w - 2} ${h - 2}V2H${w - fout}Z`} fill={ink} fillOpacity="0.350" stroke="none" />
            <path d={`M${w - fout} 4L${w - 2} ${h - 2}`} stroke={edge} />
            <rect x={w - fout - 4} y="-1" width="8" height="8" fill={body} fillOpacity="0.500" />
          </g>
        )}
      </svg>
      {label && <span>{label}</span>}
    </ClipBox>
  );
};

const Ticks = () => {
  const out: React.ReactNode[] = [];
  for (let s = 1; s <= 300; s++) {
    const x = Math.round(22 + (s * 280) / 30);
    const top = s % 30 === 0 ? 17 : s % 10 === 0 ? 25 : s % 2 === 0 ? 33 : 41;
    out.push(<path key={s} d={`M${x} ${top}V49`} />);
  }
  return (
    <svg width={LANE_W} height="50" stroke="#222" strokeWidth="2" shapeRendering="crispEdges">
      {out}
      <path d="M1536 5V50" stroke="#8d8883" />
    </svg>
  );
};

const times = ["00:00.00", "00:30.00", "01:00.00", "01:30.00", "02:00.00", "02:30.00", "03:00.00", "03:30.00", "04:00.00", "04:30.00"];
const tabs: [string, number][] = [["Tracks", 160], ["Sequence", 160], ["Clips", 160], ["Mixing Board", 170], ["MIDI", 160], ["Drum", 160], ["QuickScribe", 162], ["Song", 160], ["Waveform", 160], ["Meter Bridge", 167]];

const Menu = ({ value, w, h, light, plain }: { value: string; w?: number; h?: number; light?: boolean; plain?: boolean }) => (
  <SelectBox $w={w} $h={h} $light={light} $tight={!!light && value.length > 8}>
    <select aria-label={value} defaultValue={value}>
      <option>{value}</option>
    </select>
    {!plain && <Tri w={14} h={9} />}
  </SelectBox>
);

const Tools = ({ items, r }: { items: Tool[]; r?: number }) => (
  <>
    {items.map(([n, tone, art]) => (
      <ToolButton key={n} aria-label={n} $tone={tone} $r={r}>{art}</ToolButton>
    ))}
  </>
);

const ListIcon = ({ item }: { item: Item }) => {
  const [, c, lv, light, kind] = item;
  if (kind === "movie")
    return <svg width="22" height="18" viewBox="0 0 22 18" fill="none" stroke="#111" strokeWidth="2"><path d="M2 2H20M2 16H20" strokeDasharray="2 2" /><path d="M3 6H9V13H3ZM18 6H13V13H18M13 9H17" /></svg>;
  if (kind === "cond")
    return <svg width="22" height="18" viewBox="0 0 22 18" fill="#111"><circle cx="11" cy="4" r="3" /><path d="M3 1L5 7L9 8H14L19 5L20 7L15 11L14 17H9V11L3 8Z" /></svg>;
  if (lv === 0)
    return (
      <>
        <Tri w={14} h={9} c="#222" />
        <svg width="22" height="18" viewBox="0 0 22 18"><path d="M3 4H5V2H10V4H18V16H3Z" fill={c} stroke="#111" strokeWidth="2" /></svg>
      </>
    );
  return (
    <Swatch $c={c}>
      {kind === "aux" ? (
        <svg width="12" height="18" viewBox="0 0 12 18"><path d="M6 0V18" stroke="#111" strokeWidth="2" /><rect x="3" y="6" width="6" height="8" rx="2" fill="#555" stroke="#111" /></svg>
      ) : kind === "master" ? (
        <svg width="16" height="18" viewBox="0 0 16 18"><path d="M8 0V16" stroke="#4fd6f0" strokeWidth="4" /><path d="M2 6H14V11H2Z" fill="#4fd6f0" /></svg>
      ) : (
        <Approx c={light ? "#fff" : "#111"} one={kind === "mono"} />
      )}
    </Swatch>
  );
};

const TrackRow = ({ t, i }: { t: TrackDef; i: number }) => {
  const h = i === 29 ? 36 : 32;
  if (t.folder)
    return (
      <Row $h={h}>
        <Head $in={false}>
          <Plate $c={t.c} $white={!!t.w}>
            <Tri w={14} h={9} c="#1a1a1a" />
            <span>{t.n}</span>
          </Plate>
        </Head>
        <Lane $folder />
      </Row>
    );
  return (
    <Row $h={h}>
      <Head $in={!t.top}>
        <Plate $c={t.c} $white={!!t.w}>
          <WaveMark mono={t.mono} />
          <span>{t.n}</span>
          <Keys>
            {t.mono && (
              <KeyButton $w={24} aria-label="Monitor">
                <svg width="14" height="14" viewBox="0 0 14 14"><path d="M1 5H5L12 0V14L5 9H1Z" fill="#fff" /></svg>
              </KeyButton>
            )}
            <KeyButton $green={t.on} aria-label="Play"><Tri w={9} h={11} dir="right" c={t.on ? "#123" : "#fff"} /></KeyButton>
            {t.mono ? (
              <KeyButton $w={24} aria-label="Record">
                <svg width="12" height="12"><circle cx="6" cy="6" r="6" fill="#fff" /></svg>
              </KeyButton>
            ) : (
              <Gap $w={24} />
            )}
            <KeyButton aria-label="Options"><Tri w={13} h={8} c="#fff" /></KeyButton>
          </Keys>
        </Plate>
        <HeadTail>
          <MiniMeter><i /><i /></MiniMeter>
          <ZoomButton aria-label="Zoom"><Lens /></ZoomButton>
        </HeadTail>
      </Head>
      <Lane>
        {(t.clips || []).map((c, k) => (
          <Clip key={k} def={c} p={t.pal || "cyan"} d={t.d ?? 1} h={h - 6} seed={i * 977 + k * 131 + 7} />
        ))}
      </Lane>
    </Row>
  );
};

export default function App() {
  return (
    <Window>
      <Global />
      <TitleBar>
        <Lights>
          <Light aria-label="Close" $c="#fe5f57" $e="#e04840" />
          <Light aria-label="Minimize" $c="#febb2e" $e="#dfa023" />
          <Light aria-label="Full screen" $c="#28c840" $e="#1dab30" />
        </Lights>
        <h1>
          <svg width="26" height="30" viewBox="0 0 26 30">
            <path d="M5 0H19L25 6V28H5Z" fill="#fafafa" />
            <circle cx="12" cy="18" r="10" fill="#1c2126" stroke="#27b39a" strokeWidth="2" />
            <path d="M8 15H12V20H8ZM14 20V15H17V18H14" fill="none" stroke="#8b959c" />
          </svg>
          FLO-Selenge-Mix
        </h1>
      </TitleBar>

      <Toolbar>
        <Transport>
          <SegRow>
            <Seg>
              <SegBtn $w={48} aria-label="Rewind"><Tri w={11} h={14} dir="left" /><Tri w={11} h={14} dir="left" /></SegBtn>
              <SegBtn $w={34} aria-label="Step back"><Tri w={11} h={14} dir="left" /></SegBtn>
              <SegBtn $w={34} aria-label="Step forward"><Tri w={11} h={14} dir="right" /></SegBtn>
              <SegBtn $w={46} aria-label="Fast forward"><Tri w={11} h={14} dir="right" /><Tri w={11} h={14} dir="right" /></SegBtn>
            </Seg>
            <Seg>
              <SegBtn $w={52} aria-label="To start"><svg width="20" height="22"><path d="M1 0H3V22H1ZM20 0V22L4 11Z" fill="#222" /></svg></SegBtn>
              <SegBtn $w={58} aria-label="Stop"><svg width="18" height="18"><path d="M0 0H18V18H0Z" fill="#222" /></svg></SegBtn>
              <SegBtn $w={52} aria-label="Play"><Tri w={19} h={23} dir="right" c="#222" /></SegBtn>
            </Seg>
            <Seg>
              <SegBtn $w={52} aria-label="Pause"><svg width="18" height="18"><path d="M0 0H6V18H0ZM12 0H18V18H12Z" fill="#222" /></svg></SegBtn>
              <SegBtn $w={52} aria-label="Record"><svg width="20" height="20"><circle cx="10" cy="10" r="9" fill="#222" /></svg></SegBtn>
            </Seg>
          </SegRow>
          <PadRow><Tools items={memoryTools} /></PadRow>
        </Transport>
        <Rule $before={24} $after={22} />

        <Display>
          <Counters>
            <Counter>0:00:00.00 <Tri w={12} h={8} /></Counter>
            <Counter>1|1|000 <Carets><Tri w={12} h={8} /><Tri w={12} h={8} /></Carets></Counter>
          </Counters>
          <Readouts>
            <span><b>start</b>1|1|000</span>
            <span><b>stop</b>171|4|479</span>
            <span><b>in</b>1|4|079</span>
            <span><b>out</b>3|2|239</span>
            <span>Sequence 1</span>
            <Meter44><span>4</span><span>4</span></Meter44>
            <Beat />
            <svg width="10" height="24" viewBox="0 0 10 24"><path d="M9 0V20" stroke="#aaa" strokeWidth="2" /><ellipse cx="5" cy="20" rx="5" ry="4" fill="#aaa" /></svg>
            <span>=</span>
            <span>95.00</span>
          </Readouts>
        </Display>

        <Rule $before={24} $after={22} />
        <Clocking>
          <Menu value="Internal Clock" />
          <Menu value="48k" plain />
          <Menu value="512" plain />
          <Menu value="24 Bit Integer" />
          <Menu value="30 fps nd" />
        </Clocking>
        <Rule $before={24} $after={22} />
        <Pad $cols={4} $w={50} $gap={8}><Tools items={audioTools} /></Pad>
        <Rule $before={28} $after={18} />
        <Pad $cols={9} $w={50} $gap={8}><Tools items={editTools} /></Pad>
        <Rule $before={20} $after={18} />
        <Pad $cols={10} $w={54} $gap={4}><Tools items={windowTools} r={11} /></Pad>
        <Rule $before={16} $after={22} />
        <Notes>Real time<br />Pre gen<br />Cache</Notes>
      </Toolbar>

      <Workspace>
        <Sidebar>
          <SideHead>
            <SideTab>Tr…</SideTab>
            <SideTab aria-label="Panel menu"><PlayDisc /></SideTab>
          </SideHead>
          <SideBody>
            <SideMain>
              <Search>
                <svg width="24" height="24" viewBox="0 0 24 24" fill="none" stroke="#666" strokeWidth="4"><circle cx="10" cy="9" r="7" /><path d="M14 15L21 22" /></svg>
                <input aria-label="Search tracks" />
              </Search>
              <TrackList>
                {list.map((it, i) => (
                  <ListRow key={i} $lv={it[2]} $sel={i >= 2 && i < 52} $fs={it[0].includes("...") ? 17 : it[2] === 0 ? 18 : 19}>
                    <ListIcon item={it} />
                    <span>{it[0]}</span>
                  </ListRow>
                ))}
              </TrackList>
              <SideFill />
            </SideMain>
            <SideScroll>
              <Tri w={12} h={12} dir="up" c="#a8a29c" />
              <Tri w={12} h={12} dir="down" c="#a8a29c" />
            </SideScroll>
          </SideBody>
        </Sidebar>

        <Editor>
          <TabBar>
            {tabs.map(([n, w]) => (
              <Tab key={n} $w={w} $on={n === "Sequence"}>{n}</Tab>
            ))}
            <Spacer />
            <Tab $w={207} $on>
              <span>Sequence 1</span>
              <Tri w={12} h={8} c="#ffe860" />
              <PlayDisc />
            </Tab>
          </TabBar>

          <StripRows>
            <StripRow>
              <Strip $w={714}>
                <Knob $on>T</Knob>
                <Gap $w={11} />
                <WaveMark />
                <Gap $w={3} />
                <Cell $w={225} $fs={21}>Selenge - 96.61 BPM</Cell>
                <KeyButton $green aria-label="Play"><Tri w={9} h={11} dir="right" c="#123" /></KeyButton>
                <Gap $w={33} />
                <Menu value="O Built-i…ut 1-2" w={174} h={32} light />
                <Gap $w={8} />
                <Menu value="take 1" w={174} h={32} light />
              </Strip>
              <Strip $w={505} $ml={17}>
                <Knob>M</Knob>
                <Gap $w={15} />
                <Cell $w={18}>A</Cell>
                <ColorWell aria-label="Automation" />
                <Gap $w={11} />
                <svg width="14" height="26" viewBox="0 0 14 26"><path d="M0 11L7 1L14 11ZM0 16H14L7 26Z" fill="#4a4745" /></svg>
                <Gap $w={18} />
                <svg width="30" height="32" viewBox="0 0 30 32"><ellipse cx="15" cy="17" rx="13" ry="13" fill="#f4f3f1" stroke="#777" strokeWidth="2" /><circle cx="15" cy="9" r="3" fill="#777" /></svg>
                <Gap $w={18} />
                <Fader>
                  <input type="range" aria-label="Volume" defaultValue={53} />
                  <div><span>48</span><span>12</span><span>3036</span></div>
                </Fader>
                <Levels><i /><i /><i /><i /></Levels>
              </Strip>
              <Spacer />
              <Strip $w={628}>
                <Knob>G</Knob>
                <Gap $w={8} />
                <Check type="checkbox" aria-label="Grid" />
                <Gap $w={6} />
                <Menu value="Fixed" w={94} h={32} light />
                <Gap $w={8} />
                <Menu value="0.01 Sec." w={114} h={32} light />
                <Gap $w={10} />
                <TimeField aria-label="Grid resolution" defaultValue="0:00:00.01" />
                <Gap $w={4} />
                <Check type="checkbox" aria-label="Snap to grid" />
                <Gap $w={1} />
                <Flag c="#6464f4" />
                <Gap $w={19} />
                <Check type="checkbox" aria-label="Snap to markers" />
                <Gap $w={1} />
                <Flag c="#ecd82a" />
                <Gap $w={20} />
                <svg width="24" height="24" viewBox="0 0 24 24"><path d="M3 2V14H15" fill="none" stroke="#5468b8" strokeWidth="4" /><path d="M14 7L23 14L14 22Z" fill="#5468b8" /></svg>
                <Gap $w={6} />
                <DropButton aria-label="Grid options"><Tri w={14} h={9} /></DropButton>
              </Strip>
            </StripRow>
            <StripRow>
              <Strip $w={344}>
                <Knob>C</Knob>
                <Gap $w={7} />
                <Cell $w={102}>04:03.89</Cell>
                <Cell $w={190}>SonoBus....29-Maria</Cell>
              </Strip>
              <Strip $w={40} $ml={16}><Knob $solo>E</Knob></Strip>
              <Spacer />
              <Strip $w={575}>
                <Knob>S</Knob>
                <Gap $w={8} />
                <svg width="24" height="20" viewBox="0 0 24 20"><path d="M1 2V14H12L8 10Q14 4 20 14L23 14Q20 -2 6 7Z" fill="#fff" /></svg>
                <Cell $w={113} $end>0:00:00.00</Cell>
                <Gap $w={9} />
                <KeyButton $w={28} aria-label="Selection start"><svg width="20" height="16"><path d="M0 8L11 0V5H20V11H11V16Z" fill="#fff" /></svg></KeyButton>
                <Cell $w={107} $end>0:05:25.89</Cell>
                <Gap $w={9} />
                <KeyButton $w={28} aria-label="Selection end"><svg width="20" height="16"><path d="M20 8L9 0V5H0V11H9V16Z" fill="#fff" /></svg></KeyButton>
                <Cell $w={107} $end>0:05:25.89</Cell>
                <Gap $w={13} />
                <DropButton aria-label="Selection options"><Tri w={14} h={9} /></DropButton>
                <Gap $w={8} />
                <Check type="checkbox" aria-label="Auto select" />
                <Gap $w={2} />
                <svg width="24" height="26" viewBox="0 0 24 26"><path d="M4 3H21V10H8" fill="none" stroke="#888" strokeWidth="2" /><path d="M1 3V20L5 17L9 25L12 23L8 15H14Z" fill="#5468b8" /></svg>
              </Strip>
              <Gap $w={998} />
            </StripRow>
          </StripRows>

          <RulerArea>
            <Gutter />
            <Ruler>
              <TickRow>
                <TickLabels>{times.map((t) => <span key={t}>{t}</span>)}</TickLabels>
                <Ticks />
              </TickRow>
              <MarkerRow>
                <Flag c="#ecd82a" />
                <MarkerLabel>end of selenge</MarkerLabel>
                <Flag c="#ecd82a" />
              </MarkerRow>
              <ConductorRow>
                <svg width="40" height="22" viewBox="0 0 40 22" stroke="#111" strokeWidth="2"><path d="M1 1H16V21H1Z" fill="#e3dcd5" /><path d="M1 1L16 11L1 21Z" fill="#888" /><path d="M17 1H37V21H17Z" fill="#888" /></svg>
              </ConductorRow>
              <SequenceBar>
                <svg width="20" height="22" viewBox="0 0 20 22"><path d="M0 1L19 11L0 21Z" fill="#888" stroke="#222" strokeWidth="2" /></svg>
              </SequenceBar>
              <PlayheadGrip />
              <Playhead $top={16} />
            </Ruler>
            <RightGutter><Flag c="#ecd82a" /></RightGutter>
          </RulerArea>

          <TracksArea>
            <Tracks>
              {tracks.map((t, i) => <TrackRow key={i} t={t} i={i} />)}
              <TracksHead><Playhead $top={0} /></TracksHead>
            </Tracks>
            <VScroll>
              <Tri w={13} h={12} dir="up" c="#111" />
              <VTrack><VThumb /></VTrack>
              <VCell aria-label="Scroll down"><Tri w={13} h={12} c="#111" /></VCell>
              <VCell $line aria-label="Zoom in vertically"><svg width="16" height="16"><path d="M0 8H16M8 0V16" stroke="#111" strokeWidth="4" /></svg></VCell>
              <VCell $line aria-label="Zoom out vertically"><svg width="16" height="4"><path d="M0 2H16" stroke="#111" strokeWidth="4" /></svg></VCell>
            </VScroll>
          </TracksArea>

          <Foot>
            <HCell $w={29} aria-label="Layout"><svg width="22" height="22" viewBox="0 0 22 22" fill="none" stroke="#111" strokeWidth="2"><path d="M1 1H21V21H1ZM1 5H21M7 5V21M10 8H18V18H10Z" /></svg></HCell>
            <HCell $w={29} $line aria-label="Snapshot"><svg width="22" height="18" viewBox="0 0 22 18"><path d="M0 4H6L8 0H14L16 4H22V18H0Z" fill="#333" /><circle cx="11" cy="11" r="4" fill="#ddd" /></svg></HCell>
            <HCell $w={30} aria-label="Scroll left"><Tri w={11} h={13} dir="left" c="#111" /></HCell>
            <HTrack><HThumb /></HTrack>
            <HCell $w={31} aria-label="Scroll right"><Tri w={11} h={13} dir="right" c="#111" /></HCell>
            <HCell $w={30} $line aria-label="Zoom out"><svg width="16" height="4"><path d="M0 2H16" stroke="#111" strokeWidth="4" /></svg></HCell>
            <HCell $w={30} $line aria-label="Zoom in"><svg width="16" height="16"><path d="M0 8H16M8 0V16" stroke="#111" strokeWidth="4" /></svg></HCell>
          </Foot>
        </Editor>
      </Workspace>
    </Window>
  );
}
